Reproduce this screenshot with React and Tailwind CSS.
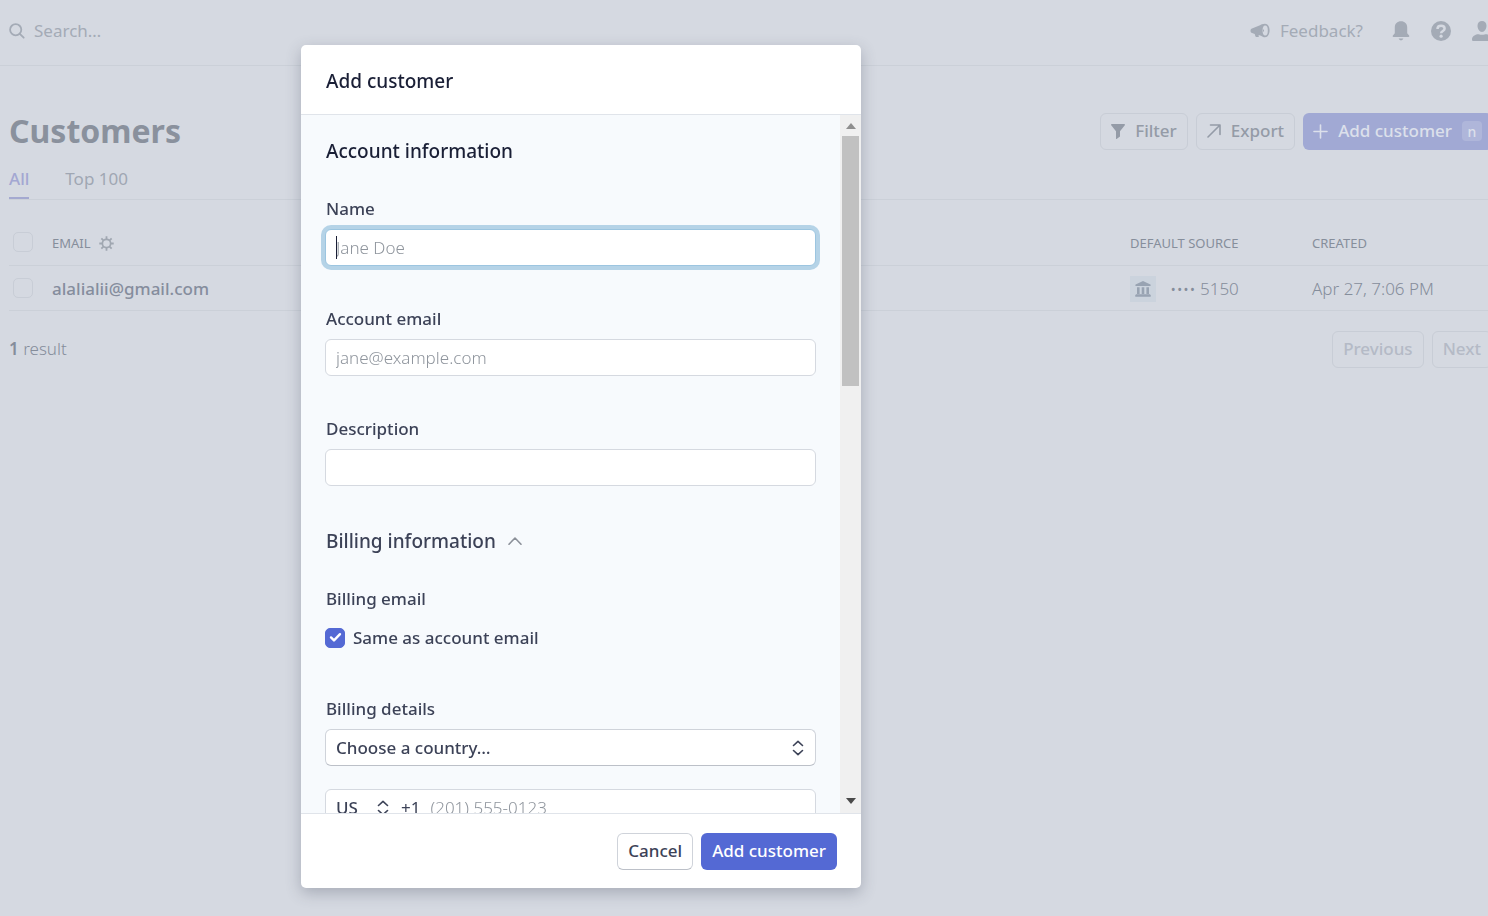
import React, { useState } from "react";

const SearchIcon = () => (
  <svg width="16" height="16" viewBox="0 0 16 16" fill="none" stroke="currentColor" strokeWidth="1.8">
    <circle cx="6.700" cy="6.700" r="5.600" />
    <path d="M10.800 10.800 14.700 14.700" strokeLinecap="round" />
  </svg>
);

const MegaphoneIcon = () => (
  <svg width="20" height="16" viewBox="0 0 20 16" fill="currentColor">
    <path d="M1.400 5.800 10 2.200C11 1.600 12.500.800 15 .8c3 0 4.600 3 4.600 6.400S18 14.200 15 14.200c-1.600 0-3-.7-4-1.500L8.600 12l.2 1.400c0 .5-.3.600-.7.600H6.300c-.5 0-.7-.2-.9-.7L4.700 11 1.400 9.800C.2 9.400.2 6.300 1.400 5.800Z" />
    <ellipse cx="15.200" cy="7.500" rx="2.600" ry="5" className="fill-[#d5d9e1]" />
    <path d="M13 6.200c1.400 0 1.400 2.600 0 2.600Z" />
  </svg>
);

const BellIcon = () => (
  <svg width="18" height="20" viewBox="0 0 18 20" fill="currentColor">
    <path d="M9 .3c-3.700 0-6.200 2.500-6.200 6v5.900L.9 14.500c-.5.700-.2 1.400.6 1.400h15c.8 0 1.100-.7.600-1.400l-1.900-2.300V6.300c0-3.500-2.500-6-6.200-6ZM6.600 17.600a2.500 2.500 0 0 0 4.800 0Z" />
  </svg>
);

const HelpIcon = () => (
  <svg width="20" height="20" viewBox="0 0 20 20">
    <circle cx="10" cy="10" r="10" fill="currentColor" />
    <path d="M6.500 7.900C6.500 5.800 8.100 4.800 10.100 4.800s3.500 1 3.500 2.900c0 2.300-3.500 2.200-3.500 4.600" fill="none" className="stroke-[#d5d9e1]" strokeWidth="2.500" />
    <circle cx="10.100" cy="15.200" r="1.600" className="fill-[#d5d9e1]" />
  </svg>
);

const PersonIcon = () => (
  <svg width="20" height="20" viewBox="0 0 20 20" fill="currentColor">
    <path d="M10 0c2.600 0 4.500 1.900 4.500 4.800S12.600 11 10 11 5.500 7.700 5.500 4.800 7.400 0 10 0ZM0 18.500c0-3 2.500-4.700 5.300-5.300 1.200-.2 2.500.6 4.700.6s3.500-.8 4.700-.6c2.800.6 5.300 2.300 5.300 5.300 0 1-.5 1.500-1.500 1.500h-17C.5 20 0 19.500 0 18.500Z" />
  </svg>
);

const FilterIcon = () => (
  <svg width="14" height="15" viewBox="0 0 14 15" fill="currentColor">
    <path d="M.8 0h12.400c.7 0 1 .8.600 1.300L9 7.300v5.100L5.600 15c-.3.200-.6 0-.6-.3V7.300L.2 1.300C-.2.800.1 0 .8 0Z" />
  </svg>
);

const ExportIcon = () => (
  <svg width="14" height="14" viewBox="0 0 14 14" fill="none" stroke="currentColor" strokeWidth="1.600" strokeLinecap="round" strokeLinejoin="round">
    <path d="M1 13 13 1M3.500 1H13v9.500" />
  </svg>
);

const PlusIcon = () => (
  <svg width="15" height="15" viewBox="0 0 15 15" fill="none" stroke="currentColor" strokeWidth="1.600" strokeLinecap="round">
    <path d="M7.500 1v13M1 7.500h13" />
  </svg>
);

const GearIcon = () => (
  <svg width="15" height="15" viewBox="0 0 16 16" fill="none" stroke="currentColor">
    <circle cx="8" cy="8" r="4.400" strokeWidth="1.800" />
    <path d="M8 .3v3M8 12.700v3M.3 8h3M12.700 8h3M2.500 2.500l2.200 2.200M11.300 11.300l2.200 2.200M2.500 13.500l2.200-2.200M11.300 4.700l2.200-2.200" strokeWidth="1.900" />
  </svg>
);

const BankIcon = () => (
  <svg width="16" height="16" viewBox="0 0 16 16" fill="currentColor">
    <path d="M8 0 15.400 3.500c.4.200.4 1.500-.2 1.500H.8C.2 5 .2 3.700.6 3.500ZM2 6.300h2.600V13H2ZM6.700 6.300h2.600V13H6.700ZM11.400 6.300H14V13h-2.600ZM1 13.200h14l.8 1.200c.3.600 0 1.300-.6 1.300H.8c-.6 0-.9-.7-.6-1.300Z" />
  </svg>
);

const UpDownIcon = () => (
  <svg width="12" height="16" viewBox="0 0 12 16" fill="none" stroke="currentColor" strokeWidth="1.600" strokeLinecap="round" strokeLinejoin="round">
    <path d="M1.500 5.500 6 1.300l4.500 4.200M1.500 10.500 6 14.700l4.500-4.200" />
  </svg>
);

const columnHead = "font-normal text-[13px] text-left text-[#868e9b]";
const outlineButton =
  "h-[37px] px-[10px] flex items-center rounded-md border border-[#c8cdd6] text-[17px] font-medium";
const fieldInput =
  "w-full h-[37px] px-[10px] rounded-md border border-[#d5d9e0] bg-white text-[17px] text-[#3c4257] placeholder:font-light placeholder:text-[#8f959d] outline-none";

const Field = ({ id, label, children }) => (
  <div>
    <label htmlFor={id} className="block mb-2 pl-px text-[17px] leading-6 font-medium">
      {label}
    </label>
    {children}
  </div>
);

const Header = () => (
  <header className="h-[66px] pl-[9px] pb-1 flex items-center justify-between border-b border-[#cbd0d8] text-[#a4abb6]">
    <label className="flex items-center gap-[9px]">
      <SearchIcon />
      <input
        type="text"
        aria-label="Search"
        placeholder="Search…"
        className="w-60 bg-transparent text-[17px] placeholder:text-[#a4abb6] outline-none"
      />
    </label>
    <div className="flex items-center gap-[21px]">
      <a href="#feedback" className="mr-2 flex items-center gap-[10px] text-[17px]">
        <MegaphoneIcon />
        Feedback?
      </a>
      <button aria-label="Notifications">
        <BellIcon />
      </button>
      <button aria-label="Help">
        <HelpIcon />
      </button>
      <button aria-label="Account">
        <PersonIcon />
      </button>
    </div>
  </header>
);

const CustomersTable = () => (
  <table className="w-full table-fixed border-collapse">
    <thead>
      <tr className="h-[65px] border-b border-[#cbd0d8]">
        <th className="w-[43px] pt-5 pl-1">
          <input
            type="checkbox"
            aria-label="Select all"
            className="block size-5 appearance-none rounded-[5px] border border-[#c8cdd6]"
          />
        </th>
        <th className={`${columnHead} pt-[22px]`}>
          <span className="flex items-center gap-2">
            EMAIL
            <button aria-label="Column settings" className="text-[#a0a7b1]">
              <GearIcon />
            </button>
          </span>
        </th>
        <th className={`${columnHead} w-[182px] pt-[22px]`}>DEFAULT SOURCE</th>
        <th className={`${columnHead} w-[180px] pt-[22px]`}>CREATED</th>
      </tr>
    </thead>
    <tbody>
      <tr className="h-[45px] border-b border-[#cbd0d8] text-[17px] font-light text-[#858d9b]">
        <td className="pl-1">
          <input
            type="checkbox"
            aria-label="Select alalialii@gmail.com"
            className="block size-5 appearance-none rounded-[5px] border border-[#c8cdd6]"
          />
        </td>
        <td className="pt-[2px] font-medium text-[#858d9d]">alalialii@gmail.com</td>
        <td className="pt-[2px]">
          <span className="flex items-center gap-[14px]">
            <span className="size-[26px] flex items-center justify-center bg-[#cbd3dd] text-[#98a3b2]">
              <BankIcon />
            </span>
            •••• 5150
          </span>
        </td>
        <td className="pt-[2px]">Apr 27, 7:06 PM</td>
      </tr>
    </tbody>
  </table>
);

const CustomersPage = () => (
  <div className="min-h-screen overflow-hidden bg-[#d5d9e1]">
    <div className="-mr-1">
      <Header />
      <main className="pl-[9px]">
        <div className="pt-[46px] flex items-center justify-between">
          <h1 className="text-[32px] leading-[38px] font-bold text-[#8a919d]">Customers</h1>
          <div className="flex gap-2 text-[#949ba7]">
            <button className={`${outlineButton} gap-[10px]`}>
              <FilterIcon />
              Filter
            </button>
            <button className={`${outlineButton} gap-[10px]`}>
              <ExportIcon />
              Export
            </button>
            <button className="h-[37px] px-[10px] flex items-center gap-[10px] rounded-md bg-[#a1a9d4] text-[17px] font-medium text-[#dce0eb]">
              <PlusIcon />
              Add customer
              <kbd className="size-5 flex items-center justify-center rounded bg-[#afb6da] font-[inherit] text-[14px]">
                n
              </kbd>
            </button>
          </div>
        </div>
        <nav className="h-[50px] flex gap-9 border-b border-[#cbd0d8] text-[17px] text-[#a0a7b3]">
          <a href="#all" className="pt-4 border-b-2 border-[#a4a9d0] font-medium text-[#a3a7d2]">
            All
          </a>
          <a href="#top" className="pt-4">
            Top 100
          </a>
        </nav>
        <CustomersTable />
        <div className="pt-5 flex items-center justify-between">
          <p className="text-[17px] font-light text-[#858d9b]">
            <strong className="font-semibold">1</strong> result
          </p>
          <div className="flex gap-2 text-[#b4bac6]">
            <button className={outlineButton}>Previous</button>
            <button className={outlineButton}>Next</button>
          </div>
        </div>
      </main>
    </div>
  </div>
);

const AddCustomerModal = () => {
  const [sameEmail, setSameEmail] = useState(true);

  return (
    <div className="fixed inset-0 pt-[45px] pb-7 pl-[301px] flex">
      <div
        role="dialog"
        aria-labelledby="modal-title"
        className="w-[560px] flex flex-col overflow-hidden rounded-[5px] bg-white text-[#3c4257] shadow-[0_5px_15px_rgba(60,66,87,0.3)]"
      >
        <div className="h-[70px] px-[25px] pt-1 flex items-center border-b border-[#e0e4ea]">
          <h2 id="modal-title" className="text-[19px] font-medium text-[#1a1f36]">
            Add customer
          </h2>
        </div>

        <div className="min-h-0 flex-1 flex bg-[#f7fafd]">
          <form className="flex-1 px-6 pt-6 overflow-y-auto [scrollbar-width:none]">
            <h3 className="mb-[34px] pl-px text-[19px] leading-6 font-medium text-[#1a1f36]">
              Account information
            </h3>
            <div className="mb-[43px] flex flex-col gap-[41px]">
              <Field id="name" label="Name">
                <div className="relative">
                  <input
                    id="name"
                    type="text"
                    placeholder="Jane Doe"
                    className="w-full h-[37px] px-[10px] rounded-md border border-[#9cc5e0] bg-white text-[17px] text-[#3c4257] placeholder:font-light placeholder:text-[#8f959d] outline-none ring-4 ring-[#b5d3e7] caret-transparent"
                  />
                  <span className="absolute left-[11px] top-[7px] w-px h-[23px] bg-[#1a1f36]" />
                </div>
              </Field>
              <Field id="email" label="Account email">
                <input id="email" type="email" placeholder="jane@example.com" className={fieldInput} />
              </Field>
              <Field id="description" label="Description">
                <input id="description" type="text" className={fieldInput} />
              </Field>
            </div>

            <h3 className="mb-[34px] pl-px text-[19px] leading-6 font-medium">
              <button type="button" className="flex items-center gap-3">
                Billing information
                <svg width="14" height="8" viewBox="0 0 14 8" fill="none" stroke="#8b9099" strokeWidth="1.600" strokeLinecap="round" strokeLinejoin="round">
                  <path d="M1 7.200 7 1l6 6.200" />
                </svg>
              </button>
            </h3>
            <div className="pb-10 flex flex-col gap-[41px]">
              <Field id="same-email" label="Billing email">
                <label className="h-[37px] pt-px flex items-center gap-2 text-[17px] font-medium">
                  <span className="relative size-5">
                    <input
                      id="same-email"
                      type="checkbox"
                      checked={sameEmail}
                      onChange={(e) => setSameEmail(e.target.checked)}
                      className="peer block size-5 appearance-none rounded-[5px] border border-[#d5d9e0] bg-white checked:border-[#5469d4] checked:bg-[#5469d4]"
                    />
                    <svg
                      className="absolute inset-0 hidden pointer-events-none peer-checked:block"
                      width="20"
                      height="20"
                      viewBox="0 0 20 20"
                      fill="none"
                      stroke="white"
                      strokeWidth="2.400"
                      strokeLinecap="round"
                      strokeLinejoin="round"
                    >
                      <path d="M6 9.400 9 12.400 15 6.200" />
                    </svg>
                  </span>
                  Same as account email
                </label>
              </Field>
              <Field id="country" label="Billing details">
                <div className="relative mb-[23px]">
                  <select
                    id="country"
                    className="w-full h-[37px] px-[10px] appearance-none rounded-md border border-[#cfd3da] border-b-[#bcc0c8] bg-white text-[17px] font-medium"
                  >
                    <option>Choose a country…</option>
                  </select>
                  <span className="absolute right-3 inset-y-0 flex items-center pointer-events-none">
                    <UpDownIcon />
                  </span>
                </div>
                <div className="h-[37px] px-[10px] flex items-center rounded-md border border-[#d5d9e0] bg-white text-[17px]">
                  <div className="relative mr-3">
                    <select aria-label="Phone country" className="w-[53px] appearance-none font-medium">
                      <option>US</option>
                    </select>
                    <span className="absolute right-0 inset-y-0 flex items-center pointer-events-none">
                      <UpDownIcon />
                    </span>
                  </div>
                  <span className="mr-[10px]">+1</span>
                  <input
                    type="tel"
                    aria-label="Phone number"
                    placeholder="(201) 555-0123"
                    className="flex-1 placeholder:font-light placeholder:text-[#8f959d] outline-none"
                  />
                </div>
              </Field>
            </div>
          </form>

          <div className="w-[21px] flex flex-col items-center justify-between bg-[#f0f0f0]">
            <div className="w-full flex flex-col items-center">
              <span className="h-[21px] flex items-center">
                <svg width="10" height="6" viewBox="0 0 10 6" fill="#8f8f8f">
                  <path d="M0 6 5 0l5 6Z" />
                </svg>
              </span>
              <span className="w-[17px] h-[250px] bg-[#c1c1c1]" />
            </div>
            <span className="h-6 flex items-center">
              <svg width="10" height="6" viewBox="0 0 10 6" fill="#4a4a4a">
                <path d="M0 0 5 6l5-6Z" />
              </svg>
            </span>
          </div>
        </div>

        <div className="h-[75px] px-6 flex items-center justify-end gap-2 border-t border-[#e0e4ea] text-[17px]">
          <button className="h-[37px] px-[10px] rounded-md border border-[#cfd3da] border-b-[#bcc0c8] bg-white font-medium">
            Cancel
          </button>
          <button className="h-[37px] px-[11px] rounded-md bg-[#5469d4] font-medium text-white">
            Add customer
          </button>
        </div>
      </div>
    </div>
  );
};

const App = () => (
  <div className="font-['Noto_Sans','Open_Sans',sans-serif]">
    <CustomersPage />
    <AddCustomerModal />
  </div>
);

export default App;
